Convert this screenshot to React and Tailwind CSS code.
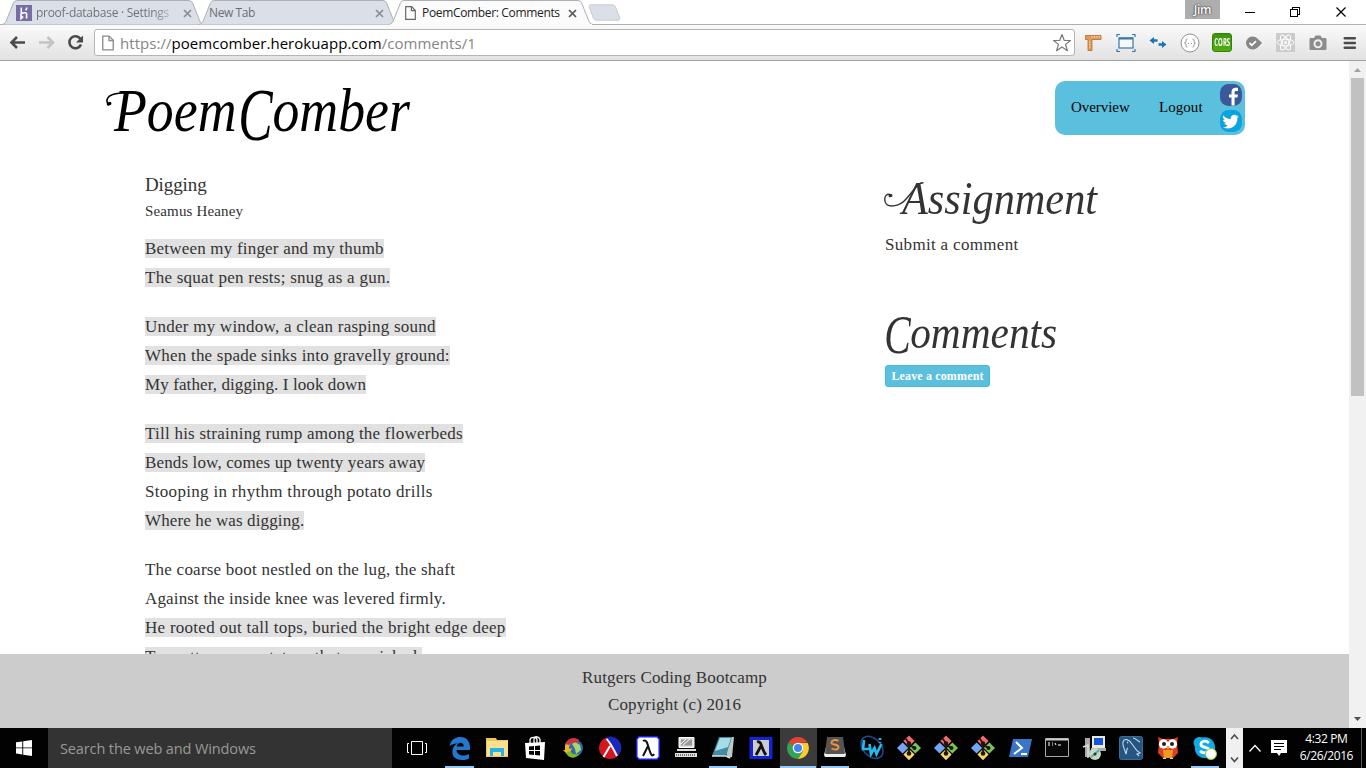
import React from "react";

const SERIF = "font-['Liberation_Serif',serif]";
const SANS = "font-['Open_Sans','Noto_Sans',sans-serif]";

const stanzas = [
  [
    ["Between my finger and my thumb", true, "tracking-[0.2px]"],
    ["The squat pen rests; snug as a gun.", true, "tracking-[0.26px]"],
  ],
  [
    ["Under my window, a clean rasping sound", true, "tracking-[0.24px]"],
    ["When the spade sinks into gravelly ground:", true, "tracking-[0.22px]"],
    ["My father, digging. I look down", true, "tracking-[0.1px]"],
  ],
  [
    ["Till his straining rump among the flowerbeds", true, "tracking-[0.24px]"],
    ["Bends low, comes up twenty years away", true, "tracking-[0.14px]"],
    ["Stooping in rhythm through potato drills", false, "tracking-[0.31px]"],
    ["Where he was digging.", true, "tracking-[0.12px]"],
  ],
  [
    ["The coarse boot nestled on the lug, the shaft", false, "tracking-[0.23px]"],
    ["Against the inside knee was levered firmly.", false, "tracking-[0.16px]"],
    ["He rooted out tall tops, buried the bright edge deep", true, "tracking-[0.27px]"],
    ["To scatter new potatoes that we picked,", true, "tracking-[0.24px]"],
  ],
];

function TabShape({ width, active }) {
  const w = width;
  const d = `M0 24.5 C3 24 4 22 5 19 L11 4 C12 1.5 13 .5 16 .5 H${w - 16} C${w - 13} .5 ${w - 12} 1.5 ${w - 11} 4 L${w - 5} 19 C${w - 4} 22 ${w - 3} 24 ${w} 24.5`;
  return (
    <svg className="absolute left-0 top-0" width={w} height="25" viewBox={`0 0 ${w} 25`}>
      <path d={d} fill={active ? "#fbfbfb" : "#dbe0e8"} stroke="#adafb2" />
      {active && <path d={`M1 25H${w - 1}`} stroke="#fafafa" strokeWidth="2" />}
    </svg>
  );
}

function Close({ color }) {
  return (
    <svg width="9" height="9" viewBox="0 0 9 9" className="shrink-0">
      <path d="M1 1l7 7M8 1L1 8" stroke={color} strokeWidth="1.7" />
    </svg>
  );
}

function PageIcon({ w, h, color = "#666" }) {
  return (
    <svg width={w} height={h} viewBox="0 0 11 14" className="shrink-0" fill="#fff" stroke={color} strokeWidth="1.2">
      <path d="M.7 .7H6.6L10.3 4.5V13.3H.7Z" />
      <path d="M6.4 .9V4.7H10.2" fill="none" />
    </svg>
  );
}

function Tabs() {
  return (
    <div className={`flex h-[24px] text-[12px] ${SANS}`}>
      <div className="relative ml-[2px] h-[25px] w-[202px]">
        <TabShape width={202} />
        <div className="relative flex h-[25px] items-center pl-[14px] pt-px">
          <svg width="16" height="16" viewBox="0 0 16 16" className="shrink-0">
            <path d="M0 0h16v16H0z" fill="#766da5" />
            <path d="M5.3 2.5v6.3c2-1 5.3-1.8 5.3 0v4.7M10.8 2.5c0 1.2-.5 2-1.2 2.7M5 10.7v3l1.6-1.5z" fill="none" stroke="#fff" strokeWidth="1.6" />
          </svg>
          <span className="ml-[4px] w-[136px] whitespace-nowrap bg-linear-to-r from-[#6b6e73] from-85% to-[#b9bdc4] bg-clip-text text-transparent tracking-[-0.28px]">proof-database · Settings</span>
          <span className="ml-[11px] flex"><Close color="#8b8d91" /></span>
        </div>
      </div>
      <div className="relative -ml-[5px] h-[25px] w-[199px]">
        <TabShape width={199} />
        <div className="relative flex h-[25px] items-center pl-[10px] pt-px">
          <span className="w-[166px] text-[#6b6e73] tracking-[-0.4px]">New Tab</span>
          <Close color="#8b8d91" />
        </div>
      </div>
      <div className="relative z-10 -ml-[9px] h-[25px] w-[204px]">
        <TabShape width={204} active />
        <div className="relative flex h-[25px] items-center pl-[16px] pt-px">
          <PageIcon w={11} h={14} />
          <span className="ml-[6px] w-[146px] whitespace-nowrap text-[#222] tracking-[-0.34px]">PoemComber: Comments</span>
          <Close color="#555" />
        </div>
      </div>
      <svg width="34" height="18" viewBox="0 0 34 18" className="-ml-[5px] mt-[4px]">
        <path d="M3 .8H24c2 0 3 .8 3.7 2.5l4 10.5c.5 1.6 0 2.4-1.7 2.4H9c-2 0-3-.8-3.7-2.4L1.400 3.500C.9 1.700 1.300.8 3 .8z" fill="#dbe0e8" stroke="#c7cad0" />
      </svg>
      <div className="ml-auto flex">
        <div className="flex h-[19px] w-[35px] items-center justify-center bg-[#adadad] text-[12px] font-semibold tracking-[-0.3px] text-white [text-shadow:0_0_2px_#222,0_0_1px_#444]">Jim</div>
        <svg width="146" height="24" viewBox="0 0 146 24" fill="none" stroke="#000" shapeRendering="crispEdges">
          <path d="M25 12.500h10M70.500 9.500h7v7h-7zM72.500 9V7.500h7v7H78" />
          <path d="M116.500 7.500l9 9M125.500 7.500l-9 9" shapeRendering="auto" strokeWidth="1.2" />
        </svg>
      </div>
    </div>
  );
}

function Extensions() {
  return (
    <div className="ml-[9px] flex items-center gap-[12px]">
      <svg width="20" height="20" viewBox="0 0 20 20">
        <path d="M1.500 2.500h15.500v4H8V17.500H4V6.500H1.500z" fill="#e09a5b" stroke="#b9692b" strokeWidth=".8" />
        <path d="M8 3v1.500M10.500 3v1.500M13 3v1.500M15.500 3v1.500M5 9h1.500M5 11.500h1.500M5 14h1.500" stroke="#ffe1bd" />
      </svg>
      <svg width="20" height="20" viewBox="0 0 20 20" fill="none" stroke="#3477ad">
        <path d="M1 4V1.500h3M16 1.500h3V4M19 16v2.500h-3M4 18.500H1V16" strokeWidth="1.200" />
        <rect x="3" y="5" width="14" height="10" strokeWidth="1.200" fill="#f8f8f8" />
        <path d="M3 5.500h14" strokeWidth="2" />
      </svg>
      <svg width="20" height="20" viewBox="0 0 20 20" fill="#1675b6">
        <path d="M1.500 7.500L6 4v2.300h3.500v2.400H6V11zM18.500 11.500L14 8v2.300h-3.500v2.400H14V15z" />
      </svg>
      <svg width="20" height="20" viewBox="0 0 20 20" fill="none" stroke="#929292">
        <circle cx="10" cy="10" r="9" fill="#fff" />
        <path d="M7.500 6c-1.500 0-1.500.5-1.500 1.800S5.500 10 4.500 10c1 0 1.500.7 1.500 2s0 2 1.500 2M12.500 6c1.500 0 1.500.5 1.500 1.800s.5 2.200 1.500 2.200c-1 0-1.500.7-1.500 2s0 2-1.500 2M8 10.500h1M11 10.500h1" />
      </svg>
      <div className="flex h-[19px] w-[20px] items-center justify-center rounded-[3px] border border-[#338207] bg-linear-to-b from-[#3c940c] to-[#54ad13]">
        <span className="scale-x-[0.6] text-[10px] font-bold text-white">CORS</span>
      </div>
      <svg width="20" height="20" viewBox="0 0 20 20">
        <path d="M8.500 3.500c4 0 6.500 3.500 9.500 6.500-3 3-5.500 6.500-9.500 6.500A6.500 6.500 0 0 1 8.500 3.500z" fill="#868686" />
        <path d="M5.500 10l2.300 2.300 4.200-4.200" fill="none" stroke="#fff" strokeWidth="1.800" />
      </svg>
      <svg width="20" height="20" viewBox="0 0 20 20" fill="none" stroke="#fff">
        <path d="M0 0h19v19H0z" fill="#cbcbcb" stroke="none" />
        <ellipse cx="9.500" cy="9.500" rx="8.500" ry="3.300" />
        <ellipse cx="9.500" cy="9.500" rx="8.500" ry="3.300" transform="rotate(60 9.500 9.500)" />
        <ellipse cx="9.500" cy="9.500" rx="8.500" ry="3.300" transform="rotate(120 9.500 9.500)" />
        <circle cx="9.500" cy="9.500" r="1.500" fill="#fff" stroke="none" />
      </svg>
      <svg width="20" height="20" viewBox="0 0 20 20">
        <path d="M3 5h3l1.500-2.500h5L14 5h3c1 0 1.500.5 1.500 1.500v9c0 1-.5 1.500-1.500 1.500H3c-1 0-1.500-.5-1.500-1.500v-9C1.500 5.500 2 5 3 5z" fill="#8c8c8c" />
        <circle cx="10" cy="10.800" r="3.500" fill="none" stroke="#eee" strokeWidth="2" />
      </svg>
      <svg width="20" height="20" viewBox="0 0 20 20" stroke="#4b4b4b" strokeWidth="2.600" strokeLinecap="round">
        <path d="M4.800 5.300h10M4.800 10h10M4.800 14.700h10" />
      </svg>
    </div>
  );
}

function Toolbar() {
  return (
    <div className={`flex h-[37px] items-center border-b border-t border-b-[#a3a3a3] border-t-[#adafb2] bg-linear-to-b from-[#fafafa] to-[#e2e2e2] ${SANS}`}>
      <svg width="94" height="34" viewBox="0 0 94 34" fill="none" className="shrink-0">
        <path d="M25 16.500H12M17 11L11.500 16.500l5.500 5.500" stroke="#4b4b4b" strokeWidth="2.600" />
        <path d="M39 16.500h13M47.500 11L53 16.500l-5.500 5.500" stroke="#c3c3c3" strokeWidth="2.600" />
        <path d="M80.500 13A6 6 0 1 0 81 18.500" stroke="#4b4b4b" strokeWidth="2.600" />
        <path d="M83 9.500v7h-7z" fill="#4b4b4b" />
      </svg>
      <div className="flex h-[27px] w-[981px] shrink-0 items-center rounded-[3px] border border-[#b5b5b5] bg-white pl-[7px] pr-[2px]">
        <PageIcon w={12} h={16} color="#8a8a8a" />
        <span className="ml-[6px] whitespace-nowrap text-[15px] leading-[20px] tracking-[0.05px] text-[#858585]">
          https://<span className="text-black">poemcomber.herokuapp.com</span>/comments/1
        </span>
        <svg width="20" height="20" viewBox="0 0 20 20" className="ml-auto">
          <path d="M10 1.500l2.300 6h6.200l-5 3.900 1.900 6.300L10 14l-5.400 3.700 1.900-6.300-5-3.900h6.200z" fill="#fff" stroke="#777" strokeWidth="1.200" strokeLinejoin="round" />
        </svg>
      </div>
      <Extensions />
    </div>
  );
}

function SiteNav() {
  return (
    <nav className="mt-[20px] flex h-[54px] w-[190px] rounded-[10px] bg-[#5bc0de] pl-[16px] text-[15px] leading-[52px] text-black">
      <span className="w-[88px] tracking-[-0.05px]">Overview</span>
      <span className="w-[61px] tracking-[0.05px]">Logout</span>
      <div className="flex flex-col gap-[4px] pt-[3px]">
        <svg width="22" height="22" viewBox="0 0 22 22">
          <rect width="22" height="22" rx="8.500" fill="#3b5998" />
          <path d="M11.500 21.500v-8H9v-3h2.500V8.300c0-3 1.500-4.600 4-4.600h2.500v3.200h-1.800c-1.200 0-1.600.5-1.600 1.600v2h3.300l-.4 3h-2.900v8z" fill="#fff" />
        </svg>
        <svg width="22" height="22" viewBox="0 0 22 22">
          <rect width="22" height="22" rx="8.500" fill="#08a5e3" />
          <path d="M19.500 6c-.7.300-1.300.5-2 .6.800-.5 1.200-1.100 1.500-1.900-.7.400-1.400.7-2.300.9a3.600 3.600 0 0 0-6.100 3.200C7.600 8.600 5 7.200 3.200 5c-1 1.700-.5 3.700 1.100 4.800-.6 0-1.100-.2-1.600-.4 0 1.700 1.200 3.200 2.900 3.500-.5.200-1 .2-1.600.1.500 1.400 1.800 2.400 3.300 2.500-1.500 1.200-3.400 1.700-5.200 1.500 7 4.400 15.800 0 15.600-9.200.7-.5 1.300-1.100 1.800-1.800z" fill="#fff" stroke="#087aaa" strokeWidth=".4" />
        </svg>
      </div>
    </nav>
  );
}

function Poem() {
  return (
    <article className="w-[739px] text-[#333]">
      <h4 className="h-[26px] text-[19px] leading-[26px] tracking-[-0.1px]">Digging</h4>
      <h5 className="mt-px h-[24px] text-[15px] leading-[24px] tracking-[0.15px]">Seamus Heaney</h5>
      <div className="mt-[11px] flex flex-col gap-[20px] text-[17px] leading-[29px]">
        {stanzas.map((lines, i) => (
          <div key={i}>
            {lines.map(([text, marked, tracking]) => (
              <div key={text} className={`h-[29px] whitespace-nowrap ${tracking}`}>
                <span className={marked ? "bg-[#e1e1e1]" : ""}>{text}</span>
              </div>
            ))}
          </div>
        ))}
      </div>
    </article>
  );
}

function Side() {
  return (
    <aside className="text-[#333]">
      <h2 className="relative -mt-[4px] h-[60px] w-[220px] whitespace-nowrap pl-[18px] text-[47px] italic leading-[60px]">
        <svg className="absolute left-0 top-[13px]" width="44" height="32" viewBox="0 0 44 32" fill="none" stroke="#333" strokeLinecap="round">
          <path d="M7 14C3 12 0 15 1 20c1 7 14 7 22-3L33 5c1.500-2 3-3 6-3.200" strokeWidth="1.400" />
          <path d="M7 14.500l-1 .3" strokeWidth="3" />
        </svg>
        <span className="inline-block origin-left scale-x-[0.9]">Assignment</span>
      </h2>
      <p className="mt-[4px] h-[26px] pl-px text-[17px] leading-[26px] tracking-[0.32px]">Submit a comment</p>
      <h2 className="mt-[44px] h-[60px] whitespace-nowrap text-[47px] italic leading-[60px]">
        <span className="inline-block origin-left scale-x-[0.88]"><span className="relative top-[5px] -ml-[3px] -mr-[4px] inline-block scale-x-[0.82] text-[55px] leading-[40px]">C</span>omments</span>
      </h2>
      <button className="ml-px mt-[3px] flex h-[22px] w-[105px] items-center justify-center rounded-[3px] border border-[#46b8da] bg-[#5bc0de] text-[12px] font-bold tracking-[0.15px] text-white">Leave a comment</button>
    </aside>
  );
}

function PageScrollbar() {
  return (
    <div className="flex w-[17px] shrink-0 flex-col items-center bg-[#f1f1f1]">
      <svg width="17" height="17" viewBox="0 0 17 17"><path d="M5 11l3.500-4 3.500 4z" fill="#a3a3a3" /></svg>
      <div className="h-[318px] w-[13px] bg-[#c1c1c1]" />
      <svg width="17" height="17" viewBox="0 0 17 17" className="mt-auto"><path d="M5 6h7l-3.500 4z" fill="#505050" /></svg>
    </div>
  );
}

function Git() {
  return (
    <svg width="26" height="26" viewBox="0 0 26 26">
      <path d="M13 .5l5.600 5.600-5.600 5.600-5.600-5.600z" fill="#ef6b72" />
      <path d="M6.600 7.400l5.600 5.600-5.600 5.600L1 13z" fill="#72a7f5" />
      <path d="M19.400 7.400L25 13l-5.600 5.600-5.600-5.600z" fill="#7ac757" />
      <path d="M13 14l5.600 5.600-5.600 5.600-5.600-5.600z" fill="#f6d863" />
      <path d="M9.500 3.500L13 8v12M13 9l6 5" stroke="#201515" strokeWidth="1.800" fill="none" />
      <circle cx="13" cy="8.500" r="2.200" fill="#201515" /><circle cx="13" cy="18.500" r="2.300" fill="#201515" /><circle cx="18.500" cy="13" r="2" fill="#201515" />
    </svg>
  );
}

const I = ({ children }) => <svg width="26" height="26" viewBox="0 0 26 26">{children}</svg>;

const apps = [
  { line: "w-[29px]", icon: <I><path d="M2.500 11C4 4.500 8.500 2 13.500 2 20 2 23 7 23 12v3H9.500c.3 4 3.500 5.500 7 5.500 2.300 0 4.200-.6 5.500-1.500v4.500c-2 1-4.300 1.500-7 1.500-7 0-10.500-4.500-9.500-9.500C6 12 8 9.500 10.500 8.500 8 8.200 5 9 2.500 11zM9.700 11.500h7c0-5-6-4.700-7 0z" fill="#2377ce" fillRule="evenodd" /></I> },
  { icon: <I><path d="M2 3h10l1 2h11v17H2z" fill="#efc65b" /><path d="M3 6h21v15H3z" fill="#fce08e" /><path d="M6 13h14v8h-3v-4h-8v4H6z" fill="#27b2ee" /></I> },
  { icon: <I><path d="M8 8V5c0-3 7-4 7 0v3M12 8V4c0-4 6-2 6 1v3" fill="none" stroke="#fff" strokeWidth="1.300" /><path d="M3 8l20-1-1 18-18-2z" fill="#fff" /><path d="M7 11.500l5-.5v4H7zM13 11l5-.500V15h-5zM7 16h5v4l-5-.5zM13 16h5v4.500l-5-.5z" fill="#000" /></I> },
  { icon: <I><circle cx="15" cy="13" r="8" fill="#2d69ad" /><path d="M12 9l3-2 5 3 1 5-5 4-1-5z" fill="#a7d56b" /><path d="M5 12C5 5 12 1 19 5l-2 3C12 6 9 9 9 14l3-1-3 8-6-6h2z" fill="#ebb82a" /><path d="M5 9C8 3 14 1 19 5l-2 3c-3-1-6 0-8 2z" fill="#d52e40" /><path d="M6 18c3 6 9 6 14 1-5 1-8 0-10-3z" fill="#7fb928" /></I> },
  { icon: <I><circle cx="13" cy="13" r="11" fill="#d31620" /><path d="M9 2.500a11 11 0 0 1 12 18z" fill="#1927bd" /><path d="M9.500 4c3 2 6 8 10.500 17M13 11L6.500 22" stroke="#fff" strokeWidth="2" fill="none" /></I> },
  { icon: <I><path d="M4 1.800h18l2.200 2.200v18L22 24.200H4L1.800 22V4z" fill="#fff" stroke="#191cff" strokeWidth="1.500" /><path d="M8 6c5-3 5 8 8 13 1 2 2 2 3 0M13 11L8 21" stroke="#111" strokeWidth="2" fill="none" /></I> },
  { icon: <I><path d="M6 2.500h15v10H6z" fill="#ddd" stroke="#fff" /><path d="M8 4.500h11v6H8z" fill="#999" /><path d="M10 10l7-6M8 9l5-5" stroke="#fff" /><path d="M4 14h19v2H4zM2 18h22v4H2z" fill="#ddd" /><path d="M3 20h20" stroke="#111" strokeDasharray="1 1" /></I> },
  { line: "w-[28px]", icon: <I><path d="M10 2h14l-2 20-4 1z" fill="#bfc9c8" /><path d="M9 2h13l-6 19H2z" fill="#438ba2" /><path d="M10 3h11l-3 9L5 16z" fill="#a5dce6" /><path d="M2 21h14l4 2" stroke="#ddd" strokeWidth="1.500" fill="none" /></I> },
  { icon: <I><path d="M1.500 2h23v22h-23z" fill="#1222d5" /><path d="M5 5h16v16H5z" fill="#ccc" /><path d="M9 7c5-2 4 7 9 13M13 11L8 20" stroke="#111" strokeWidth="2.800" fill="none" /></I> },
  { line: "w-[36px]", active: true, icon: <I><path d="M13 13L3.500 7.500A11 11 0 0 1 22.500 7.500L13 8z" fill="#e04436" /><path d="M13 13L3.500 7.500A11 11 0 0 0 13 24l5-8z" fill="#33a355" /><path d="M13 8h9.700A11 11 0 0 1 13 24l5-8z" fill="#f9cb31" /><circle cx="13" cy="13" r="5.300" fill="#fff" /><circle cx="13" cy="13" r="4" fill="#4584ed" /></I> },
  { line: "w-[28px]", icon: <I><path d="M4 12h18l2 8-1 2H3l-1-2z" fill="#eee" /><path d="M5 2h16l2 16-1 1H4l-1-1z" fill="#555453" /><path d="M16.500 6c-3-2-7-1-7 2 0 2 7 1 7 4s-4 3-7 1.500" fill="none" stroke="#ed933f" strokeWidth="1.900" /></I> },
  { icon: <I><path d="M6 2C-1 5 2 16 10 21c7 5 14 2 14-5C24 8 13-1 6 2z" fill="none" stroke="#1d4b8f" strokeWidth="1.500" /><path d="M5 5L4 14h6M10.500 9l1.500 10 3.500-6 2 6 5-10M21 3v2M21 7v1" fill="none" stroke="#27b7e9" strokeWidth="2.700" /></I> },
  { icon: <Git /> },
  { icon: <Git /> },
  { icon: <Git /> },
  { icon: <I><path d="M6 4h19l-4 18H2z" fill="#3875c9" /><path d="M9 7l6 6-8 6M14 19h6" stroke="#fff" strokeWidth="2" fill="none" /></I> },
  { icon: <I><path d="M1.500 3.500h23v18h-23z" fill="#090909" stroke="#aaa" /><path d="M2 4.500h22" stroke="#ccc" strokeWidth="2" /><path d="M4 8h2M4 10h2M8 8h1M8 10h1M11 8l1 2M14 10h3" stroke="#fff" /></I> },
  { icon: <I><path d="M11 1h13v12H11z" fill="#e9e9dc" /><path d="M13 3h9v7h-9z" fill="#1754dd" /><path d="M10 13h15v3H10zM4 3h5v19H4z" fill="#aaa" /><path d="M2 12l5-2v13" stroke="#ddd" strokeWidth="1.500" fill="none" /><circle cx="14" cy="19" r="6" fill="#c6d5c5" /><path d="M14 19l4-4M14 19l-4 3" stroke="#4fb5a9" strokeWidth="2" /><circle cx="14" cy="19" r="1.500" fill="#333" /></I> },
  { icon: <I><rect x="1.500" y="1.500" width="23" height="23" rx="2" fill="#245681" stroke="#386d94" /><path d="M8 19c-1-4-4-9-3-12 1-4 6-3 9 2 3 4 4 7 8 9l-3 1 2 2M8 19c1-2 0-5 2-6M9 7l1 1M15 3c3 0 4 3 7 4" fill="none" stroke="#c5d8e5" strokeWidth="1.100" /></I> },
  { icon: <I><path d="M3 2l5 2h10l5-2-1 6 1 10-5 5H8l-5-5 1-10z" fill="#dc4020" /><path d="M8 15h10l-1 8H9z" fill="#ee9b26" /><circle cx="8.500" cy="9" r="4.700" fill="#fff" /><circle cx="17.500" cy="9" r="4.700" fill="#fff" /><circle cx="9" cy="9" r="2" fill="#222" /><circle cx="17" cy="9" r="2" fill="#222" /><path d="M11.500 12h3l-1.500 3z" fill="#ffb31b" /><path d="M8 23.500h3M15 23.500h3" stroke="#ddd" /></I> },
  { line: "w-[28px]", icon: <I><path d="M3 4c3-3 6-2 8-1.500C18 1 24 7 23 14c2 7-3 11-8 9C8 24 2 19 3 12 1 9 1 6 3 4z" fill="#12a9e7" /><path d="M17 8c-3-3-9-2-8 2 1 3 8 2 8 5s-6 4-9 1" fill="none" stroke="#fff" strokeWidth="2.800" /><circle cx="19" cy="19" r="5.500" fill="#fff" stroke="#91cc20" /></I> },
];

function Taskbar() {
  return (
    <div className={`flex h-[40px] shrink-0 bg-[#020202] ${SANS}`}>
      <div className="flex w-[48px] items-center justify-center">
        <svg width="16" height="16" viewBox="0 0 16 16" fill="#fff"><path d="M0 2.300l6.300-.9v6H0zM7.200 1.200L16 0v7.400H7.200zM0 8.300h6.300v6.100L0 13.500zM7.200 8.300H16V16l-8.800-1.300z" /></svg>
      </div>
      <div className="flex w-[344px] items-center bg-[#333] pb-px pl-[12px] pt-[2px] text-[14.500px] tracking-[-0.12px] text-[#999]">Search the web and Windows</div>
      <div className="flex w-[49px] items-center justify-center">
        <svg width="22" height="16" viewBox="0 0 22 16" fill="none" stroke="#fff"><path d="M5.500 1.500h11v13h-11zM3 3.500H1.500v9H3M19 3.500h1.500v9H19" /></svg>
      </div>
      {apps.map((app, i) => (
        <div key={i} className={`flex shrink-0 flex-col items-center ${i < 9 ? "w-[37.667px]" : "w-[37px]"} ${app.active ? "bg-[#3b3b3b]" : ""}`}>
          <div className="flex h-[38px] items-center pt-[1px]">{app.icon}</div>
          {app.line && <div className={`h-[2px] bg-[#93c9f4] ${app.line}`} />}
        </div>
      ))}
      <div className="ml-[2px] flex w-[17px] shrink-0 items-center justify-center bg-[#f0f0f0]">
        <svg width="17" height="40" viewBox="0 0 17 40" fill="none" stroke="#505050" strokeWidth="1.700"><path d="M5 11l3.500-4 3.500 4M5 29.500l3.500 4 3.500-4" /></svg>
      </div>
      <svg width="52" height="40" viewBox="0 0 52 40" fill="none" className="shrink-0">
        <path d="M6.500 23.500l5.500-6 5.500 6" stroke="#fff" strokeWidth="1.300" />
        <path d="M28 12h16v13h-6l-2 3-2-3h-6z" fill="#fff" /><path d="M31 15.500h10M31 18.500h10M31 21.500h7" stroke="#000" />
      </svg>
      <div className="w-[63px] shrink-0 whitespace-nowrap pt-[2px] text-center text-[12px] leading-[17px] tracking-[-0.38px] text-white">4:32 PM<br />6/26/2016</div>
      <div className="ml-auto w-[5px] border-l border-[#555]" />
    </div>
  );
}

export default function App() {
  return (
    <div className="flex h-[768px] w-[1366px] flex-col overflow-hidden bg-white">
      <Tabs />
      <Toolbar />
      <div className="flex min-h-0 flex-1">
        <div className={`flex min-w-0 flex-1 flex-col ${SERIF}`}>
          <main className="min-h-0 flex-1 overflow-hidden">
            <header className="flex h-[111px] justify-between pl-[105px] pr-[104px]">
              <h1 className="relative h-[100px] w-[320px] whitespace-nowrap pl-[9px] text-[61px] italic leading-[100px] text-black">
                <svg className="absolute left-0 top-[29px]" width="36" height="24" viewBox="0 0 36 24" fill="none" stroke="#000" strokeLinecap="round">
                  <path d="M3 14C-2 5 11 1.500 32 3" strokeWidth="1.500" /><path d="M3.500 14l1.200-.5" strokeWidth="3.500" />
                </svg>
                <span className="inline-block origin-left scale-x-[0.882]">Poem<span className="relative top-[9px] -ml-[3px] -mr-[5px] inline-block scale-x-[0.8] text-[73px] leading-[60px]">C</span>omber</span>
              </h1>
              <SiteNav />
            </header>
            <div className="flex pl-[145px]">
              <Poem />
              <Side />
            </div>
          </main>
          <footer className="h-[74px] shrink-0 bg-[#ccc] pt-[10px] text-center text-[17px] leading-[27px] tracking-[0.16px] text-[#333]">
            <p>Rutgers Coding Bootcamp</p>
            <p>Copyright (c) 2016</p>
          </footer>
        </div>
        <PageScrollbar />
      </div>
      <Taskbar />
    </div>
  );
}
